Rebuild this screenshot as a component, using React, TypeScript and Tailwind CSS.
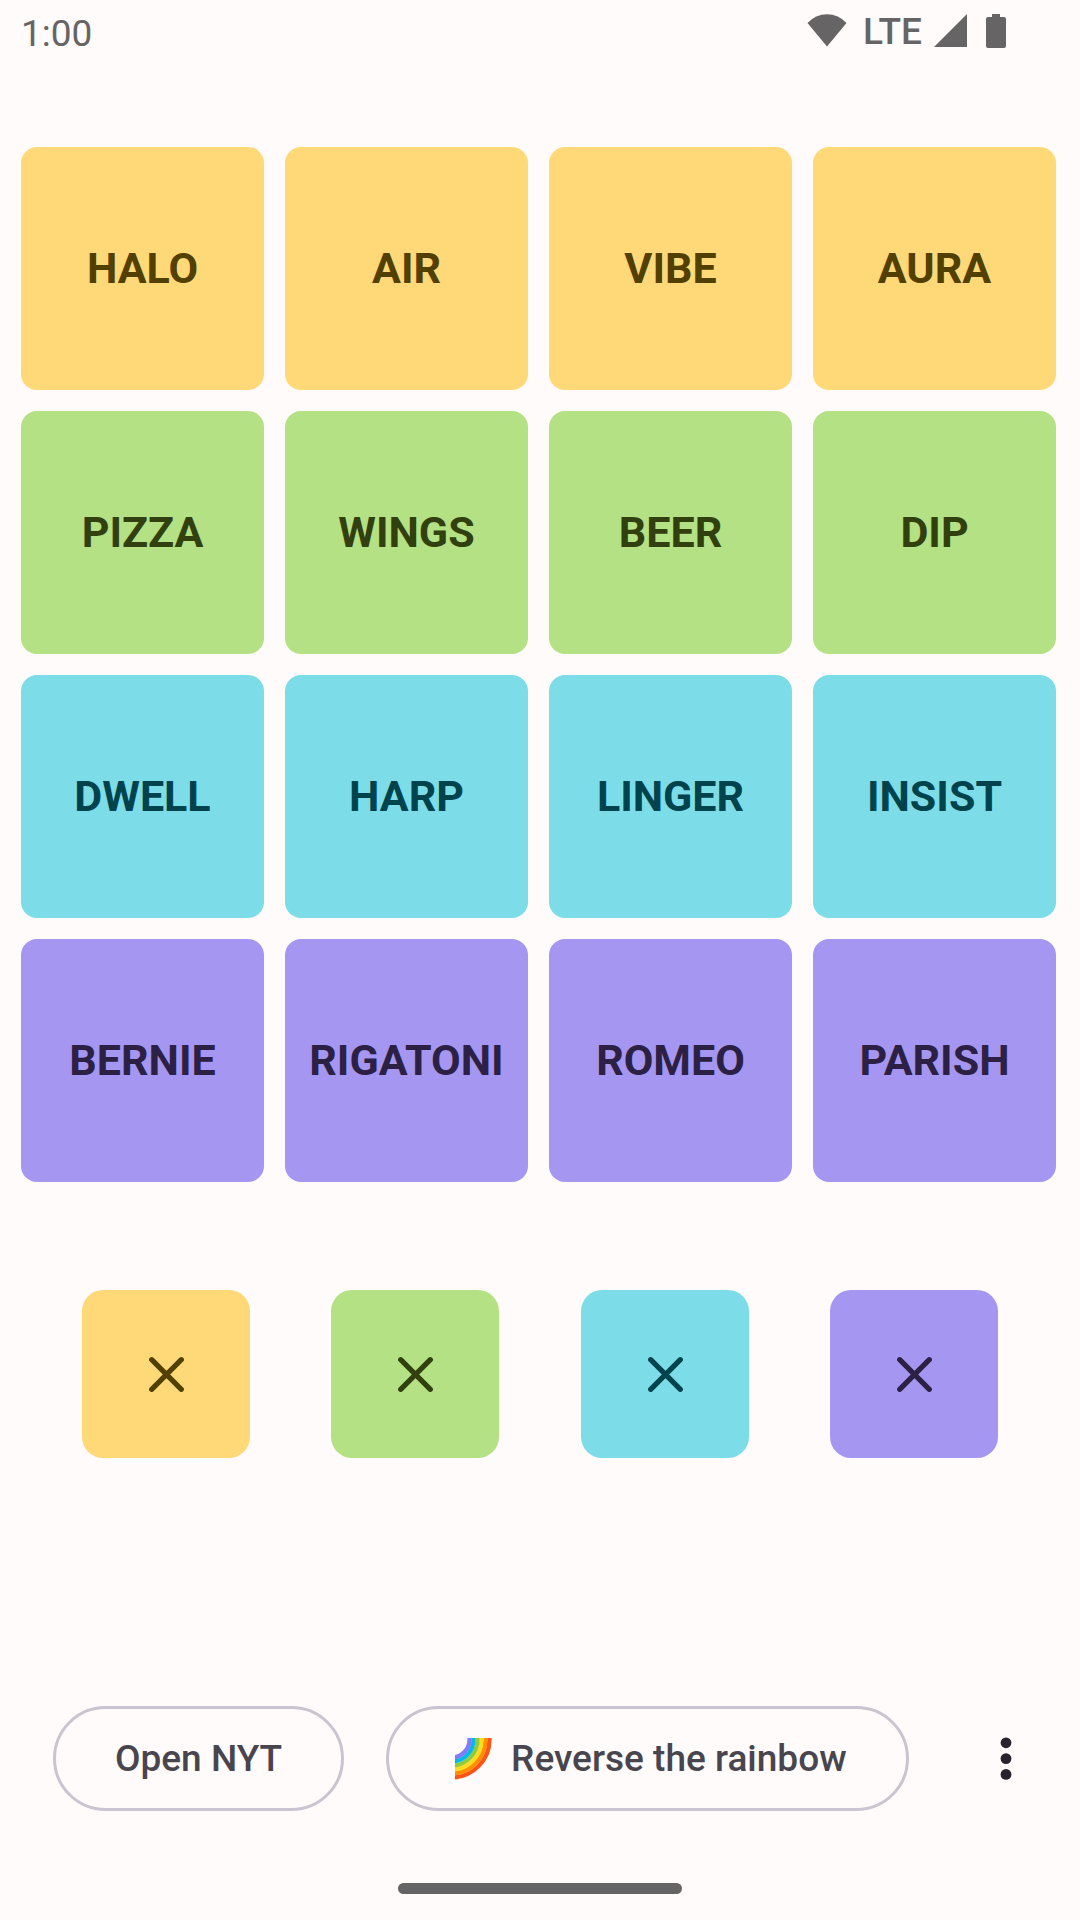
import React from "react";

type Group = { name: string; tile: string; words: string[] };

const groups: Group[] = [
  { name: "yellow", tile: "bg-[#ffd878] text-[#524000]", words: ["HALO", "AIR", "VIBE", "AURA"] },
  { name: "green", tile: "bg-[#b3e183] text-[#32400f]", words: ["PIZZA", "WINGS", "BEER", "DIP"] },
  { name: "blue", tile: "bg-[#7cdde8] text-[#00434c]", words: ["DWELL", "HARP", "LINGER", "INSIST"] },
  { name: "purple", tile: "bg-[#a596f1] text-[#2c2145]", words: ["BERNIE", "RIGATONI", "ROMEO", "PARISH"] },
];

const rainbow = [
  { r: 38, color: "#ff5317" },
  { r: 34, color: "#ff8f00" },
  { r: 30, color: "#fbdc20" },
  { r: 26, color: "#92ca3d" },
  { r: 22, color: "#00bbea" },
  { r: 18, color: "#8379fb" },
];

function StatusBar() {
  return (
    <header className="flex h-[62px] items-center justify-between pr-[74px] pl-[21px] text-[37px] leading-none text-[#666465]">
      <time className="pt-1">1:00</time>
      <div className="flex items-center">
        <svg className="h-[34px] w-[40px]" viewBox="0 0 40 34" fill="currentColor" aria-label="Wi-Fi">
          <path d="M20 32.500 0.500 9Q8.500 0.200 20 0.200t19.500 8.800Z" />
        </svg>
        <span className="mr-3 ml-4 font-medium">LTE</span>
        <svg className="h-[34px] w-[34px]" viewBox="0 0 34 34" fill="currentColor" aria-label="Signal">
          <path d="M33 0v33H0Z" />
        </svg>
        <svg className="ml-[18px] h-[34px] w-[20px]" viewBox="0 0 20 34" fill="currentColor" aria-label="Battery">
          <path d="M6 0h8v3h4a2 2 0 0 1 2 2v27a2 2 0 0 1-2 2H2a2 2 0 0 1-2-2V5a2 2 0 0 1 2-2h4Z" />
        </svg>
      </div>
    </header>
  );
}

function RainbowIcon() {
  return (
    <svg className="h-[42px] w-[37px]" viewBox="0 0 37 42" fill="none" aria-hidden="true">
      <clipPath id="bow">
        <rect width="37" height="42" />
      </clipPath>
      <g clipPath="url(#bow)" strokeWidth="4.2">
        {rainbow.map(({ r, color }) => (
          <circle key={r} cx="-3.500" cy="1.500" r={r} stroke={color} />
        ))}
      </g>
    </svg>
  );
}

export default function App() {
  return (
    <div className="flex min-h-screen flex-col bg-[#fffbfa] font-[Roboto,sans-serif]">
      <StatusBar />
      <main className="flex flex-1 flex-col pt-[85px]">
        <div className="grid grid-cols-4 gap-[21px] pr-6 pl-[21px]">
          {groups.flatMap((g) =>
            g.words.map((word) => (
              <button
                key={word}
                type="button"
                className={`aspect-square rounded-[16px] text-[43px] font-bold ${g.tile}`}
              >
                {word}
              </button>
            )),
          )}
        </div>
        <div className="mt-[108px] flex justify-evenly">
          {groups.map((g) => (
            <button
              key={g.name}
              type="button"
              aria-label={`Clear ${g.name}`}
              className={`flex size-[168px] items-center justify-center rounded-[21px] ${g.tile}`}
            >
              <svg className="size-[36px]" viewBox="0 0 36 36" fill="none" stroke="currentColor" strokeWidth="5.2" strokeLinecap="round">
                <path d="M3.700 3.700 33.300 33.300M33.300 3.700 3.700 33.300" />
              </svg>
            </button>
          ))}
        </div>
      </main>
      <footer className="pb-[26px]">
        <div className="flex items-center gap-[42px] pr-[43px] pl-[53px] text-[37px] font-medium text-[#49454f]">
          <button type="button" className="h-[105px] rounded-full border-3 border-[#cac4d0] px-[59px]">
            Open NYT
          </button>
          <button
            type="button"
            className="flex h-[105px] items-center gap-[19px] rounded-full border-3 border-[#cac4d0] pr-[59px] pl-[66px]"
          >
            <RainbowIcon />
            Reverse the rainbow
          </button>
          <button type="button" aria-label="More options" className="ml-auto flex size-[63px] items-center justify-center text-[#27222b]">
            <svg className="h-[44px] w-[12px]" viewBox="0 0 12 44" fill="currentColor">
              <circle cx="6" cy="5.800" r="5.400" />
              <circle cx="6" cy="21.600" r="5.400" />
              <circle cx="6" cy="37.400" r="5.400" />
            </svg>
          </button>
        </div>
        <div className="mx-auto mt-[72px] h-[11px] w-[284px] rounded-full bg-[#666465]" />
      </footer>
    </div>
  );
}
